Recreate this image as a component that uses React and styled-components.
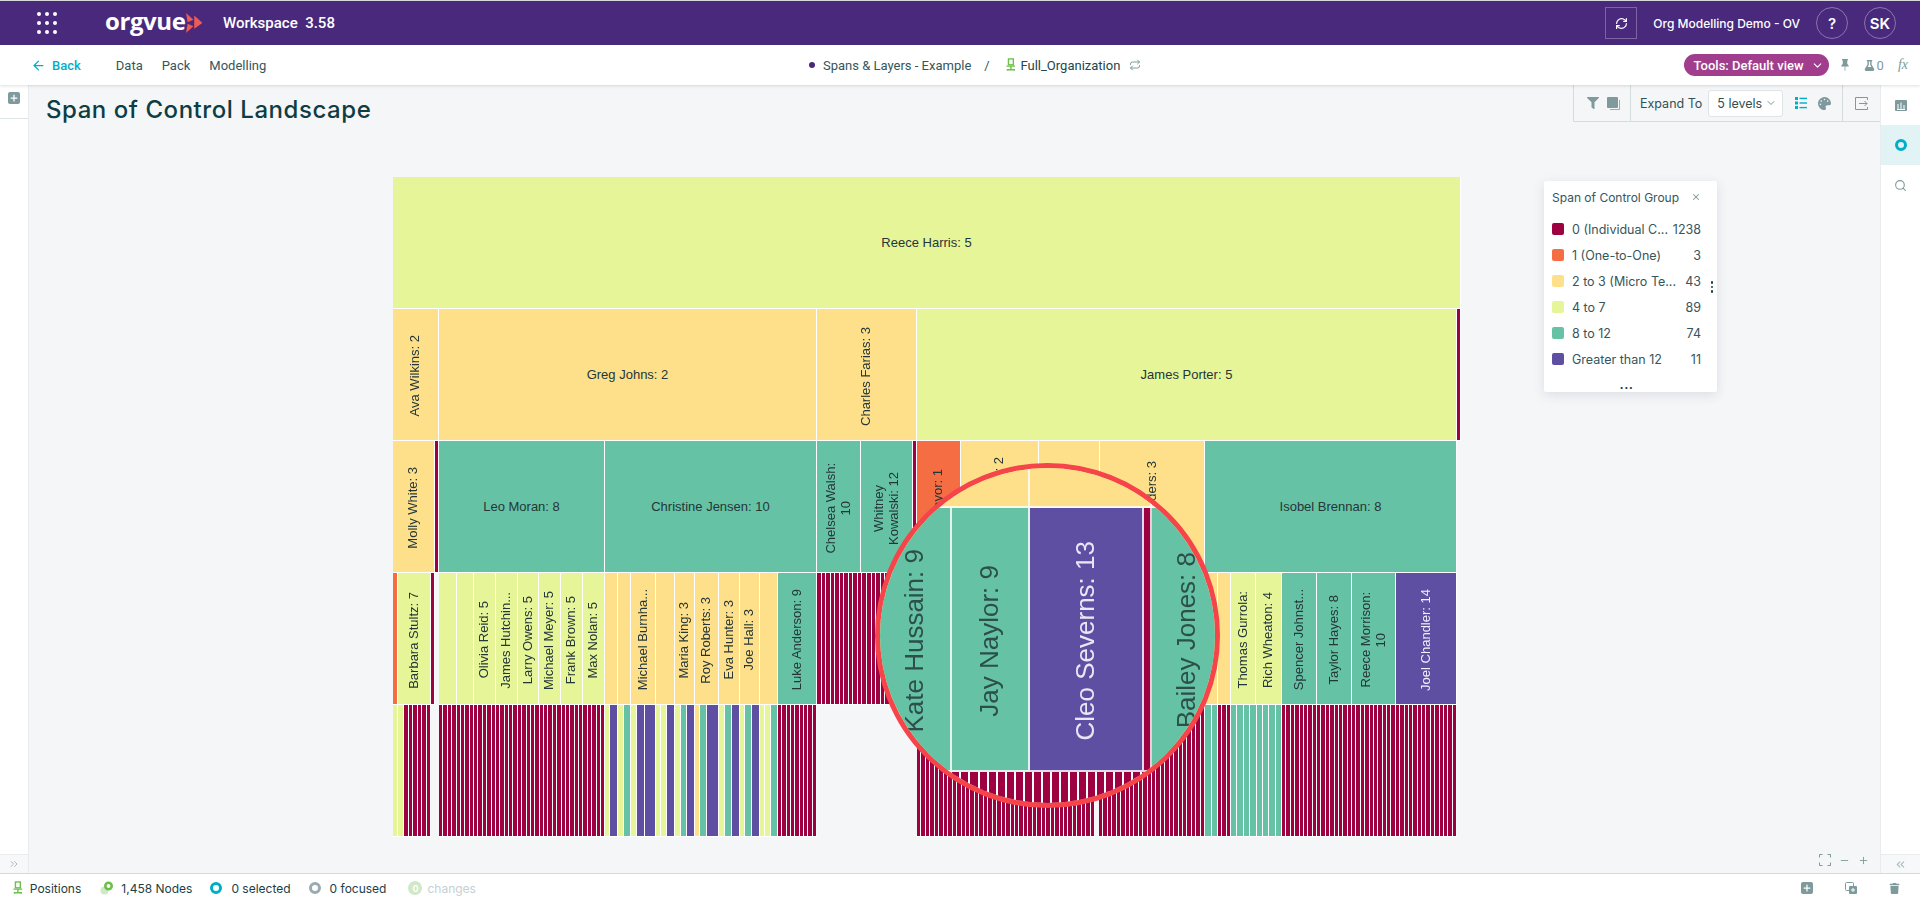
import React from 'react'
import styled, { createGlobalStyle } from 'styled-components'
import { ArrowLeft, ChevronDown, Repeat, RefreshCw, Search, X, Minus, Plus, ChevronsLeft, ChevronsRight } from 'lucide-react'
import { FaFilter, FaPalette, FaFlask, FaTrash } from 'react-icons/fa'
import { BsPinFill } from 'react-icons/bs'

const CRIMSON = '#9e0142'
const ORANGE = '#f46d43'
const YELLOW = '#fee08b'
const LIME = '#e6f598'
const GREEN = '#66c2a5'
const PURPLE = '#5e4fa2'

const GREY_ICON = '#7f9a9c'
const TEAL = '#00aec7'
const INK = '#35565b'

const GlobalStyle = createGlobalStyle`
  html, body {
    margin: 0;
    height: 100%;
    overflow: hidden;
    background: #f5f6f8;
    font-family: Inter, "Liberation Sans", sans-serif;
  }
`

const Page = styled.div`
  display: flex;
  flex-direction: column;
  height: 100vh;
`

const TopBar = styled.header`
  display: flex;
  align-items: center;
  height: 45px;
  box-sizing: border-box;
  padding: 0 24px 0 37px;
  border-top: 1px solid #d8d8dc;
  background: #49297c;
  color: #fff;
  flex: none;
`

const Dots = styled.div`
  display: grid;
  grid-template-columns: repeat(3, 4px);
  gap: 5px 4px;
  width: 20px;
`

const Dot = styled.span`
  width: 4px;
  height: 4px;
  border-radius: 50%;
  background: #fff;
`

const Logo = styled.div`
  display: flex;
  align-items: center;
  justify-content: space-between;
  margin-left: 48px;
  width: 97px;
  margin-right: 21px;
`

const LogoWord = styled.span`
  font-family: "Open Sans", sans-serif;
  font-size: 24px;
  font-weight: 700;
  line-height: 1;
  letter-spacing: -0.4px;
  margin-top: -5px;
`

const AppName = styled.span`
  font-family: Roboto, sans-serif;
  font-size: 15px;
  font-weight: 500;
  white-space: pre;
`

const SyncButton = styled.div`
  display: flex;
  align-items: center;
  justify-content: center;
  width: 32px;
  height: 32px;
  margin-left: auto;
  border: 1px solid rgba(255, 255, 255, 0.28);
  box-sizing: border-box;
`

const OrgName = styled.span`
  font-size: 12px;
  font-weight: 500;
  margin: 0 16px 0 16px;
`

const RoundButton = styled.div`
  display: flex;
  align-items: center;
  justify-content: center;
  width: 32px;
  height: 32px;
  border-radius: 50%;
  border: 1px solid rgba(255, 255, 255, 0.35);
  box-sizing: border-box;
  font-size: 15px;
  font-weight: 600;
  margin-left: ${props => props.$gap || 0}px;
`

const SubBar = styled.nav`
  display: flex;
  align-items: center;
  height: 40px;
  padding: 0 12px 0 31px;
  background: #fff;
  box-shadow: 0 1px 3px rgba(20, 40, 50, 0.15);
  position: relative;
  z-index: 2;
  flex: none;
  font-family: Roboto, sans-serif;
  font-size: 13px;
  color: ${INK};
`

const NavGroup = styled.div`
  display: flex;
  align-items: center;
  width: 778px;
  flex: none;
`

const BackLink = styled.span`
  display: flex;
  align-items: center;
  gap: 6px;
  color: ${TEAL};
  font-weight: 500;
  margin-right: 35px;
`

const NavLink = styled.span`
  margin-right: 19px;
`

const Crumbs = styled.div`
  display: flex;
  align-items: center;
`

const CrumbDot = styled.span`
  width: 6px;
  height: 6px;
  border-radius: 50%;
  background: #49297c;
  margin-right: 8px;
`

const CrumbSlash = styled.span`
  margin: 0 16px 0 13px;
`

const CrumbName = styled.span`
  margin: 0 9px 0 5px;
  color: #20474c;
`

const ToolGroup = styled.div`
  display: flex;
  align-items: center;
  margin-left: auto;
  color: ${GREY_ICON};
`

const ToolsPill = styled.div`
  display: flex;
  align-items: center;
  gap: 7px;
  width: 145px;
  height: 22px;
  box-sizing: border-box;
  padding-left: 10px;
  border-radius: 11px;
  background: #a03e8d;
  color: #fff;
  font-weight: 500;
  margin-right: 10px;
`

const FlaskCount = styled.span`
  display: flex;
  align-items: center;
  gap: 2px;
  margin: 0 14px 0 13px;
`

const Fx = styled.span`
  font-family: "Liberation Serif", serif;
  font-style: italic;
  font-size: 14px;
`

const Body = styled.div`
  display: flex;
  flex: 1;
  min-height: 0;
`

const Rail = styled.aside`
  display: flex;
  flex-direction: column;
  flex: none;
  width: ${props => props.$width}px;
  box-sizing: border-box;
  background: #fff;
  border-${props => props.$side}: 1px solid #e8ecee;
`

const RailTop = styled.div`
  display: flex;
  justify-content: center;
  height: 34px;
  padding-top: 7px;
  box-sizing: border-box;
  border-bottom: 1px solid #dfe4e6;
`

const RailFoot = styled.div`
  display: flex;
  align-items: center;
  justify-content: center;
  height: 18px;
  margin-top: auto;
  background: #f7f8fa;
  border-top: 1px solid #e8ecee;
  color: #a9bcbe;
`

const SquareAdd = styled.span`
  display: flex;
  align-items: center;
  justify-content: center;
  width: 12px;
  height: 12px;
  border-radius: 2px;
  background: ${GREY_ICON};
  color: #fff;
`

const RailItem = styled.div`
  display: flex;
  align-items: center;
  justify-content: center;
  height: 40px;
  background: ${props => (props.$active ? '#e2f3f6' : 'transparent')};
  color: ${GREY_ICON};
`

const Main = styled.main`
  position: relative;
  flex: 1;
  min-width: 0;
`

const HeaderRow = styled.div`
  display: flex;
  justify-content: space-between;
  align-items: flex-start;
  height: 37px;
`

const Title = styled.h1`
  margin: 10px 0 0 17px;
  font-size: 24px;
  line-height: 30px;
  font-weight: 500;
  letter-spacing: 0.55px;
  color: #0e3d43;
`

const ViewTools = styled.div`
  display: flex;
  height: 37px;
  width: 307px;
  box-sizing: border-box;
  background: #f5f6f8;
  border-left: 1px solid #d5dcde;
  border-bottom: 1px solid #d5dcde;
`

const ToolSection = styled.div`
  display: flex;
  align-items: center;
  gap: ${props => props.$gap || 0}px;
  width: ${props => props.$width}px;
  box-sizing: border-box;
  padding-left: ${props => props.$pad}px;
  border-right: ${props => (props.$last ? 'none' : '1px solid #d5dcde')};
  color: ${GREY_ICON};
`

const ExpandLabel = styled.span`
  font-size: 12.5px;
  color: #2f5055;
  margin-right: 6px;
  white-space: nowrap;
`

const LevelSelect = styled.div`
  display: flex;
  align-items: center;
  justify-content: space-between;
  flex: none;
  width: 75px;
  height: 27px;
  box-sizing: border-box;
  padding: 0 5px 0 8px;
  border: 1px solid #dfe4e6;
  border-radius: 3px;
  background: #fff;
  font-size: 12.5px;
  white-space: nowrap;
  color: #2f5055;
  margin-right: 12px;
`

const PaletteSlot = styled.span`
  display: flex;
  margin-left: 11px;
`

const Chart = styled.div`
  position: relative;
  width: 1068px;
  margin: 55px 0 0 364px;
`

const Row = styled.div`
  display: flex;
  height: 132px;
`

const Cell = styled.div`
  display: flex;
  align-items: center;
  justify-content: center;
  flex: none;
  box-sizing: border-box;
  overflow: hidden;
  height: 100%;
  background: ${props => props.$color};
  border-right: 1px solid #fff;
  border-bottom: 1px solid #fff;
  color: ${props => (props.$color === PURPLE ? '#f2f0fa' : '#243638')};
  font-family: "Liberation Sans", sans-serif;
  font-size: ${props => props.$size || 13}px;
`

const Gap = styled.div`
  flex: none;
  height: 100%;
`

const StripeRun = styled.div`
  display: flex;
  flex: none;
  height: 100%;
`

const Stripe = styled.div`
  flex: 1;
  box-sizing: border-box;
  background: ${props => props.$color};
  border-right: ${props => props.$line || 1}px solid #fff;
  border-bottom: 1px solid #fff;
`

const VerticalText = styled.span`
  margin-top: 3px;
  writing-mode: vertical-rl;
  transform: rotate(180deg);
  white-space: pre-line;
  text-align: center;
  line-height: 1.15;
`

const Lens = styled.div`
  position: absolute;
  left: 482px;
  top: 286px;
  display: flex;
  flex-direction: column;
  width: 345px;
  height: 345px;
  box-sizing: border-box;
  border: 5px solid #f5444a;
  border-radius: 50%;
  overflow: hidden;
  background: ${YELLOW};
`

const LensRow = styled.div`
  display: flex;
  flex: none;
  height: ${props => props.$height}px;
`

const LensCell = styled(Cell)`
  border-right: 2px solid rgba(255, 255, 255, 0.8);
  border-bottom: 2px solid rgba(255, 255, 255, 0.8);
  color: ${props => (props.$color === PURPLE ? '#e9e7f6' : '#2c4f4a')};
  filter: blur(0.3px);
`

const Legend = styled.section`
  position: absolute;
  top: 96px;
  right: 163px;
  width: 173px;
  height: 211px;
  box-sizing: border-box;
  padding: 8px 16px 0 8px;
  border-radius: 2px;
  background: #fff;
  box-shadow: 0 3px 12px rgba(30, 50, 70, 0.12);
  font-size: 12.5px;
  color: #35565b;
`

const LegendHead = styled.div`
  display: flex;
  justify-content: space-between;
  align-items: center;
  height: 16px;
  margin-bottom: 11px;
  font-size: 12px;
  color: #35565b;
`

const LegendRow = styled.div`
  display: flex;
  align-items: center;
  height: 26px;
`

const Swatch = styled.span`
  flex: none;
  width: 12px;
  height: 12px;
  border-radius: 2px;
  background: ${props => props.$color};
  margin-right: 8px;
`

const LegendName = styled.span`
  flex: 1;
  white-space: nowrap;
  overflow: hidden;
`

const LegendMore = styled.div`
  text-align: center;
  font-weight: 700;
  line-height: 10px;
  margin-top: 8px;
  letter-spacing: 0.5px;
  color: #1d4046;
`

const Kebab = styled.div`
  position: absolute;
  top: 100px;
  right: 4px;
  display: flex;
  flex-direction: column;
  gap: 2px;
`

const KebabDot = styled.span`
  width: 2.5px;
  height: 2.5px;
  border-radius: 50%;
  background: #1d4046;
`

const ZoomControls = styled.div`
  position: absolute;
  right: 11px;
  bottom: 7px;
  display: flex;
  align-items: center;
  gap: 8px;
  color: ${GREY_ICON};
`

const StatusBar = styled.footer`
  display: flex;
  align-items: center;
  flex: none;
  height: 29px;
  box-sizing: border-box;
  padding: 0 20px 0 13px;
  background: #fff;
  border-top: 1px solid #d3dadd;
  font-size: 12px;
  color: #1d4046;
`

const StatusItem = styled.span`
  display: flex;
  align-items: center;
  gap: ${props => props.$gap || 9}px;
  margin-right: ${props => props.$after}px;
  color: ${props => props.$color || 'inherit'};
`

const Ring = styled.span`
  width: 12px;
  height: 12px;
  box-sizing: border-box;
  border-radius: 50%;
  border: ${props => props.$weight || 3.5}px solid ${props => props.$color};
`

const ChangeBadge = styled.span`
  display: flex;
  align-items: center;
  justify-content: center;
  width: 14px;
  height: 14px;
  border-radius: 50%;
  background: #cfe8c6;
  color: #fff;
  font-size: 9px;
  font-weight: 700;
`

const StatusActions = styled.div`
  display: flex;
  align-items: center;
  gap: 32px;
  margin-left: auto;
  color: ${GREY_ICON};
`

const START = 393

// [end x, colour, label] - widths come from the gap to the previous end
const ROWS = [
  [[1461, LIME, 'Reece Harris: 5']],
  [
    [439, YELLOW, 'Ava Wilkins: 2'],
    [817, YELLOW, 'Greg Johns: 2'],
    [917, YELLOW, 'Charles Farias: 3'],
    [1457, LIME, 'James Porter: 5'],
    [1461, CRIMSON]
  ],
  [
    [435, YELLOW, 'Molly White: 3'],
    [439, CRIMSON],
    [605, GREEN, 'Leo Moran: 8'],
    [817, GREEN, 'Christine Jensen: 10'],
    [861, GREEN, 'Chelsea Walsh:\n10'],
    [913, GREEN, 'Whitney\nKowalski: 12'],
    [917, CRIMSON],
    [961, ORANGE, 'Lisa Mayor: 1'],
    [1039, YELLOW, 'Hannah Burton: 2'],
    [1100, YELLOW],
    [1205, YELLOW, 'Liam Sanders: 3'],
    [1457, GREEN, 'Isobel Brennan: 8']
  ],
  [
    [398, ORANGE],
    [431, LIME, 'Barbara Stultz: 7'],
    [435, CRIMSON],
    [439, null],
    [457, LIME],
    [474, LIME],
    [496, LIME, 'Olivia Reid: 5'],
    [518, LIME, 'James Hutchin...'],
    [539, LIME, 'Larry Owens: 5'],
    [561, LIME, 'Michael Meyer: 5'],
    [583, LIME, 'Frank Brown: 5'],
    [605, LIME, 'Max Nolan: 5'],
    [618, YELLOW],
    [631, YELLOW],
    [656, YELLOW, 'Michael Burnha...'],
    [675, YELLOW],
    [695, YELLOW, 'Maria King: 3'],
    [719, YELLOW, 'Roy Roberts: 3'],
    [740, YELLOW, 'Eva Hunter: 3'],
    [760, YELLOW, 'Joe Hall: 3'],
    [778, YELLOW],
    [817, GREEN, 'Luke Anderson: 9'],
    [917, 'stripes', CRIMSON, 22],
    [961, GREEN],
    [1205, GREEN],
    [1218, YELLOW],
    [1231, YELLOW],
    [1256, LIME, 'Thomas Gurrola:'],
    [1282, LIME, 'Rich Wheaton: 4'],
    [1317, GREEN, 'Spencer Johnst...'],
    [1352, GREEN, 'Taylor Hayes: 8'],
    [1396, GREEN, 'Reece Morrison:\n10'],
    [1457, PURPLE, 'Joel Chandler: 14']
  ],
  [
    [398, LIME],
    [404, LIME],
    [431, 'stripes', CRIMSON, 6],
    [439, null],
    [605, 'stripes', CRIMSON, 38],
    [610, LIME],
    [618, PURPLE],
    [624, LIME],
    [631, GREEN],
    [637, LIME],
    [645, PURPLE],
    [656, PURPLE],
    [661, LIME],
    [667, LIME],
    [675, PURPLE],
    [681, LIME],
    [687, GREEN],
    [695, PURPLE],
    [700, YELLOW],
    [707, GREEN],
    [719, PURPLE],
    [725, LIME],
    [732, GREEN],
    [740, PURPLE],
    [745, LIME],
    [752, GREEN],
    [760, PURPLE],
    [765, LIME],
    [771, LIME],
    [778, GREEN],
    [817, 'stripes', CRIMSON, 9],
    [917, null],
    [1095, 'stripes', CRIMSON, 40],
    [1099, null],
    [1205, 'stripes', CRIMSON, 24],
    [1218, 'stripes', GREEN, 2],
    [1231, 'stripes', CRIMSON, 3],
    [1282, 'stripes', GREEN, 8],
    [1457, 'stripes', CRIMSON, 40]
  ]
]

const LEGEND = [
  [CRIMSON, '0 (Individual C...', 1238],
  [ORANGE, '1 (One-to-One)', 3],
  [YELLOW, '2 to 3 (Micro Te...', 43],
  [LIME, '4 to 7', 89],
  [GREEN, '8 to 12', 74],
  [PURPLE, 'Greater than 12', 11]
]

const Stripes = ({ width, color, count, line }) => (
  <StripeRun style={{ width }}>
    {Array.from({ length: count }, (_, i) => <Stripe key={i} $color={color} $line={line} />)}
  </StripeRun>
)

const TreeCell = ({ width, color, label }) => (
  <Cell $color={color} style={{ width }}>
    {label && (width < 110 ? <VerticalText>{label}</VerticalText> : label)}
  </Cell>
)

const TreeRow = ({ cells }) => {
  let x = START
  return (
    <Row>
      {cells.map(([end, color, extra, count]) => {
        const width = end - x
        x = end
        if (color === null) return <Gap key={end} style={{ width }} />
        if (color === 'stripes') return <Stripes key={end} width={width} color={extra} count={count} />
        return <TreeCell key={end} width={width} color={color} label={extra} />
      })}
    </Row>
  )
}

const Magnifier = () => (
  <Lens>
    <LensRow $height={40}>
      <LensCell $color={YELLOW} style={{ width: 150 }} />
      <LensCell $color={YELLOW} style={{ width: 122 }} />
      <LensCell $color={YELLOW} style={{ width: 70 }} />
    </LensRow>
    <LensRow $height={264}>
      <LensCell $color={GREEN} $size={26} style={{ width: 72 }}><VerticalText>Kate Hussain: 9</VerticalText></LensCell>
      <LensCell $color={GREEN} $size={26} style={{ width: 78 }}><VerticalText>Jay Naylor: 9</VerticalText></LensCell>
      <LensCell $color={PURPLE} $size={26} style={{ width: 114 }}><VerticalText>Cleo Severns: 13</VerticalText></LensCell>
      <LensCell $color={CRIMSON} style={{ width: 8 }} />
      <LensCell $color={GREEN} $size={26} style={{ width: 72 }}><VerticalText>Bailey Jones: 8</VerticalText></LensCell>
    </LensRow>
    <LensRow $height={40}>
      <Stripes width={335} color={CRIMSON} count={37} line={2} />
    </LensRow>
  </Lens>
)

const Chair = ({ size = 14 }) => (
  <svg width={size * 0.7} height={size} viewBox="0 0 10 14" fill="none" stroke="#6cc04a" strokeWidth="1.4">
    <rect x="2.5" y="0.8" width="5" height="6" />
    <path d="M0.5 8.2h9M5 8.2v3.5M1.5 12.8v-1h7v1" />
  </svg>
)

const LogoMark = () => (
  <svg width="20" height="24" viewBox="0 0 20 24" fill="#ee5b55">
    <polygon points="0,0 9,8 2,11" />
    <polygon points="2,13 9,16 0,24" />
    <polygon points="10,3 20,12 10,19" />
  </svg>
)

const StackIcon = () => (
  <svg width="13" height="13" viewBox="0 0 13 13">
    <rect x="0" y="0" width="11" height="11" rx="1" fill={GREY_ICON} />
    <path d="M12.5 3v9.5H3" fill="none" stroke={GREY_ICON} strokeWidth="0.8" />
  </svg>
)

const ListIcon = () => (
  <svg width="12" height="12" viewBox="0 0 12 12" fill={TEAL}>
    <rect x="0" y="0" width="3" height="3" />
    <rect x="0" y="4.5" width="3" height="3" />
    <rect x="0" y="9" width="3" height="3" />
    <rect x="4.5" y="0.7" width="7.5" height="1.4" />
    <rect x="4.5" y="5.3" width="7.5" height="1.4" />
    <rect x="4.5" y="9.9" width="7.5" height="1.4" />
  </svg>
)

const ExportIcon = () => (
  <svg width="13" height="13" viewBox="0 0 13 13" fill="none" stroke={GREY_ICON} strokeWidth="1">
    <path d="M12.5 3V0.5H0.5v12h12V10" />
    <path d="M4 6.5h8M9.5 4l2.5 2.5L9.5 9" />
  </svg>
)

const BarsIcon = () => (
  <svg width="12" height="11" viewBox="0 0 12 11">
    <rect width="12" height="11" rx="1" fill={GREY_ICON} />
    <path d="M3 4v5M6 2.5V9M9 5v4M2 9.5h8" stroke="#fff" strokeWidth="1" />
  </svg>
)

const FitIcon = () => (
  <svg width="12" height="12" viewBox="0 0 12 12" fill="none" stroke={GREY_ICON} strokeWidth="1">
    <path d="M0.5 3.5v-3h3M8.5 0.5h3v3M11.5 8.5v3h-3M3.5 11.5h-3v-3" />
  </svg>
)

const NodesIcon = () => (
  <svg width="14" height="14" viewBox="0 0 14 14" fill="none">
    <circle cx="4.5" cy="9.5" r="4" fill="#cfe8c6" />
    <circle cx="8.5" cy="5" r="3.2" stroke="#6cc04a" strokeWidth="2.6" />
  </svg>
)

const CloneAddIcon = () => (
  <svg width="12" height="12" viewBox="0 0 12 12">
    <rect x="0.5" y="0.5" width="8" height="8" rx="1" fill="none" stroke={GREY_ICON} />
    <rect x="4" y="4" width="8" height="8" rx="1" fill={GREY_ICON} />
    <path d="M8 6v4M6 8h4" stroke="#fff" />
  </svg>
)

const App = () => (
  <Page>
    <GlobalStyle />
    <TopBar>
      <Dots>
        {Array.from({ length: 9 }, (_, i) => <Dot key={i} />)}
      </Dots>
      <Logo>
        <LogoWord>orgvue</LogoWord>
        <LogoMark />
      </Logo>
      <AppName>Workspace  3.58</AppName>
      <SyncButton><RefreshCw size={13} strokeWidth={2.2} /></SyncButton>
      <OrgName>Org Modelling Demo - OV</OrgName>
      <RoundButton>?</RoundButton>
      <RoundButton $gap={16}>SK</RoundButton>
    </TopBar>

    <SubBar>
      <NavGroup>
        <BackLink><ArrowLeft size={15} />Back</BackLink>
        <NavLink>Data</NavLink>
        <NavLink>Pack</NavLink>
        <NavLink>Modelling</NavLink>
      </NavGroup>
      <Crumbs>
        <CrumbDot />
        Spans &amp; Layers - Example
        <CrumbSlash>/</CrumbSlash>
        <Chair />
        <CrumbName>Full_Organization</CrumbName>
        <Repeat size={12} color={GREY_ICON} />
      </Crumbs>
      <ToolGroup>
        <ToolsPill>Tools: Default view<ChevronDown size={13} /></ToolsPill>
        <BsPinFill size={12} />
        <FlaskCount><FaFlask size={11} />0</FlaskCount>
        <Fx>fx</Fx>
      </ToolGroup>
    </SubBar>

    <Body>
      <Rail $width={29} $side="right">
        <RailTop>
          <SquareAdd><Plus size={10} strokeWidth={3} /></SquareAdd>
        </RailTop>
        <RailFoot><ChevronsRight size={12} /></RailFoot>
      </Rail>

      <Main>
        <HeaderRow>
          <Title>Span of Control Landscape</Title>
          <ViewTools>
            <ToolSection $width={57} $pad={13} $gap={8}>
              <FaFilter size={12} />
              <StackIcon />
            </ToolSection>
            <ToolSection $width={212} $pad={9}>
              <ExpandLabel>Expand To</ExpandLabel>
              <LevelSelect>5 levels<ChevronDown size={12} color={GREY_ICON} /></LevelSelect>
              <ListIcon />
              <PaletteSlot><FaPalette size={13} /></PaletteSlot>
            </ToolSection>
            <ToolSection $width={37} $pad={12} $last>
              <ExportIcon />
            </ToolSection>
          </ViewTools>
        </HeaderRow>

        <Chart>
          {ROWS.map((cells, i) => <TreeRow key={i} cells={cells} />)}
          <Magnifier />
        </Chart>

        <Legend>
          <LegendHead>Span of Control Group<X size={10} color={GREY_ICON} strokeWidth={2.5} /></LegendHead>
          {LEGEND.map(([color, name, count]) => (
            <LegendRow key={name}>
              <Swatch $color={color} />
              <LegendName>{name}</LegendName>
              {count}
            </LegendRow>
          ))}
          <LegendMore>...</LegendMore>
          <Kebab><KebabDot /><KebabDot /><KebabDot /></Kebab>
        </Legend>

        <ZoomControls>
          <FitIcon />
          <Minus size={11} />
          <Plus size={11} />
        </ZoomControls>
      </Main>

      <Rail $width={40} $side="left">
        <RailItem><BarsIcon /></RailItem>
        <RailItem $active><Ring $color={TEAL} $weight={3.5} /></RailItem>
        <RailItem><Search size={13} /></RailItem>
        <RailFoot><ChevronsLeft size={13} /></RailFoot>
      </Rail>
    </Body>

    <StatusBar>
      <StatusItem $after={19} $gap={7}><Chair />Positions</StatusItem>
      <StatusItem $after={18} $gap={7}><NodesIcon />1,458 Nodes</StatusItem>
      <StatusItem $after={18}><Ring $color={TEAL} />0 selected</StatusItem>
      <StatusItem $after={22}><Ring $color="#9aa9b2" />0 focused</StatusItem>
      <StatusItem $after={0} $gap={5} $color="#c5d0d3"><ChangeBadge>0</ChangeBadge>changes</StatusItem>
      <StatusActions>
        <SquareAdd><Plus size={10} strokeWidth={3} /></SquareAdd>
        <CloneAddIcon />
        <FaTrash size={11} />
      </StatusActions>
    </StatusBar>
  </Page>
)

export default App
